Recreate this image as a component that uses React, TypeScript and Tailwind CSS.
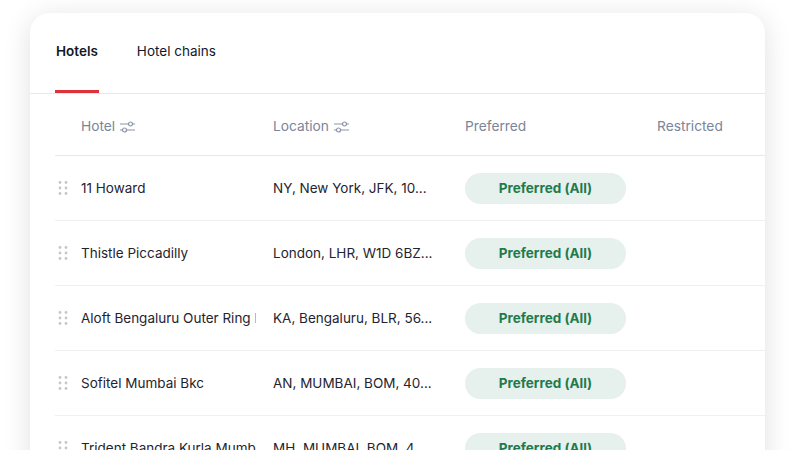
import React from "react";

const rows = [
  { name: "11 Howard", loc: "NY, New York, JFK, 10..." },
  { name: "Thistle Piccadilly", loc: "London, LHR, W1D 6BZ..." },
  { name: "Aloft Bengaluru Outer Ring Road", loc: "KA, Bengaluru, BLR, 56..." },
  { name: "Sofitel Mumbai Bkc", loc: "AN, MUMBAI, BOM, 40..." },
  { name: "Trident Bandra Kurla Mumbai", loc: "MH, MUMBAI, BOM, 4..." },
];

function FilterIcon() {
  return (
    <svg width="15" height="12" viewBox="0 0 15 12" fill="none" className="ml-[5px]">
      <line x1="0.5" y1="3" x2="14.5" y2="3" stroke="#8a94a6" strokeWidth="1.2" strokeLinecap="round" />
      <circle cx="10.5" cy="3" r="2" fill="white" stroke="#8a94a6" strokeWidth="1.2" />
      <line x1="0.5" y1="9" x2="14.5" y2="9" stroke="#8a94a6" strokeWidth="1.2" strokeLinecap="round" />
      <circle cx="4.5" cy="9" r="2" fill="white" stroke="#8a94a6" strokeWidth="1.2" />
    </svg>
  );
}

function Handle() {
  return (
    <svg width="10" height="16" viewBox="0 0 10 16" fill="#c2c6cd">
      <circle cx="2" cy="2.5" r="1.4" />
      <circle cx="8" cy="2.5" r="1.4" />
      <circle cx="2" cy="8" r="1.4" />
      <circle cx="8" cy="8" r="1.4" />
      <circle cx="2" cy="13.5" r="1.4" />
      <circle cx="8" cy="13.5" r="1.4" />
    </svg>
  );
}

export default function App() {
  return (
    <div className="w-[795px] h-[450px] overflow-hidden bg-white pt-[13px] pl-[30px]" style={{ fontFamily: "Inter, 'Noto Sans', sans-serif" }}>
      <div className="w-[735px] h-[600px] bg-white rounded-[20px] shadow-[0_4px_28px_rgba(0,0,0,0.12)]">
        <div className="flex h-[81px] border-b border-[#e6e8ec] pl-[25px]">
          <div className="relative flex items-center h-full pb-[3px] text-[13.5px] font-semibold text-[#111827]">
            <span className="px-[1px]">Hotels</span>
            <div className="absolute left-0 right-0 bottom-[0px] h-[3px] bg-[#e0323c]" />
          </div>
          <div className="flex items-center h-full pb-[3px] ml-[38px] text-[13.5px] text-[#111827]">Hotel chains</div>
        </div>
        <div className="ml-[25px]">
          <div className="flex items-center h-[62px] pt-[4px] border-b border-[#e6e8ec] text-[13.75px] text-[#7b8599]">
            <div className="w-[26px]" />
            <div className="w-[192px] flex items-center">Hotel<FilterIcon /></div>
            <div className="w-[192px] flex items-center">Location<FilterIcon /></div>
            <div className="w-[192px]">Preferred</div>
            <div>Restricted</div>
          </div>
          {rows.map((r, i) => (
            <div key={i} className="flex items-center h-[65px] border-b border-[#eef0f3] text-[13.5px] text-[#1f2430]">
              <div className="w-[26px] pl-[3px] flex items-center"><Handle /></div>
              <div className="w-[192px] pr-[17px]">
                <div className="overflow-hidden whitespace-nowrap">{r.name}</div>
              </div>
              <div className="w-[192px] pr-[16px]">
                <div className="overflow-hidden whitespace-nowrap">{r.loc}</div>
              </div>
              <div className="w-[192px]">
                <div className="w-[161px] h-[31px] rounded-full bg-[#e6f0ec] text-[13.5px] text-[#1f7a4d] font-bold flex items-center justify-center">
                  Preferred (All)
                </div>
              </div>
              <div />
            </div>
          ))}
        </div>
      </div>
    </div>
  );
}
